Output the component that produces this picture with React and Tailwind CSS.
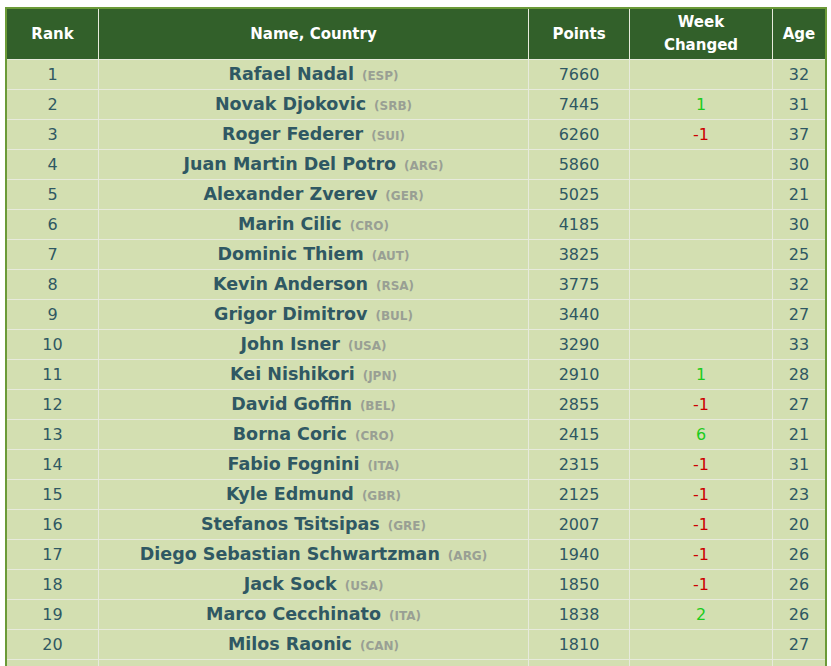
import React from 'react';

const players = [
  [1, 'Rafael Nadal', 'ESP', 7660, '', 32],
  [2, 'Novak Djokovic', 'SRB', 7445, '1', 31],
  [3, 'Roger Federer', 'SUI', 6260, '-1', 37],
  [4, 'Juan Martin Del Potro', 'ARG', 5860, '', 30],
  [5, 'Alexander Zverev', 'GER', 5025, '', 21],
  [6, 'Marin Cilic', 'CRO', 4185, '', 30],
  [7, 'Dominic Thiem', 'AUT', 3825, '', 25],
  [8, 'Kevin Anderson', 'RSA', 3775, '', 32],
  [9, 'Grigor Dimitrov', 'BUL', 3440, '', 27],
  [10, 'John Isner', 'USA', 3290, '', 33],
  [11, 'Kei Nishikori', 'JPN', 2910, '1', 28],
  [12, 'David Goffin', 'BEL', 2855, '-1', 27],
  [13, 'Borna Coric', 'CRO', 2415, '6', 21],
  [14, 'Fabio Fognini', 'ITA', 2315, '-1', 31],
  [15, 'Kyle Edmund', 'GBR', 2125, '-1', 23],
  [16, 'Stefanos Tsitsipas', 'GRE', 2007, '-1', 20],
  [17, 'Diego Sebastian Schwartzman', 'ARG', 1940, '-1', 26],
  [18, 'Jack Sock', 'USA', 1850, '-1', 26],
  [19, 'Marco Cecchinato', 'ITA', 1838, '2', 26],
  [20, 'Milos Raonic', 'CAN', 1810, '', 27],
];

const App = () => {
  const cell = 'bg-[#d3dfb1] h-[29px] flex items-center justify-center';
  const head = 'bg-[#32602a] h-[50px] flex items-center justify-center text-center text-white font-bold text-[15px] leading-[23px]';

  return (
    <div className="min-h-screen bg-white pt-[7px] pl-[5px] font-['DejaVu_Sans','Liberation_Sans',sans-serif] text-[#2f5863]">
      <div className="w-[822px] border-2 border-[#6b9a38]">
        <div className="grid grid-cols-[91px_429px_100px_142px_52px] gap-px bg-[#e7eadc]">
          {/* Header */}
          <div className={head}>Rank</div>
          <div className={head}>Name, Country</div>
          <div className={head}>Points</div>
          <div className={head}>Week<br />Changed</div>
          <div className={head}>Age</div>

          {/* Rows */}
          {players.map(([rank, name, country, points, change, age]) => (
            <React.Fragment key={rank}>
              <div className={`${cell} text-[16px]`}>{rank}</div>
              <div className={cell}>
                <span className="font-bold text-[17.5px]">{name}</span>
                <span className="ml-[8px] mt-[3px] font-bold text-[12px] text-[#999f94]">({country})</span>
              </div>
              <div className={`${cell} text-[16px]`}>{points}</div>
              <div
                className={`${cell} text-[16px] ${change.startsWith('-') ? 'text-[#cc0000]' : 'text-[#1ccc1c]'}`}
              >
                {change}
              </div>
              <div className={`${cell} text-[16px]`}>{age}</div>
            </React.Fragment>
          ))}
          <div className={cell}></div>
          <div className={cell}></div>
          <div className={cell}></div>
          <div className={cell}></div>
          <div className={cell}></div>
        </div>
      </div>
    </div>
  );
};

export default App;
